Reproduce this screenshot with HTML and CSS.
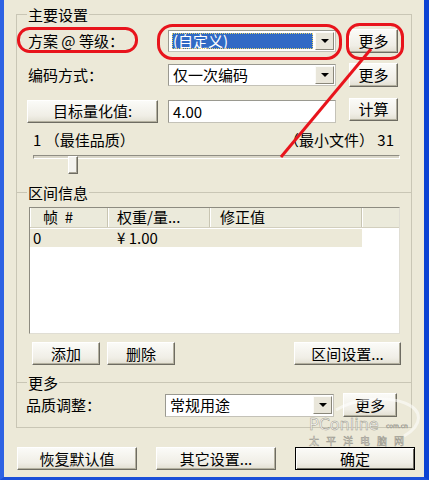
FILE: index.html
```html
<!DOCTYPE html>
<html lang="zh-CN">
<head>
  <meta charset="UTF-8">
  <title>编码设置</title>
  <link rel="stylesheet" href="styles.css">
</head>
<body>
  <div class="window">
    <div class="frame">
      <div class="group g1">
        <div class="legend"><span>主要设置</span></div>

        <div class="row r1">
          <span class="label">方案 @ 等级：</span>
          <div class="combo">
            <span class="value sel">(自定义)</span>
            <span class="arrow"></span>
          </div>
          <button class="btn more">更多</button>
        </div>

        <div class="row r2">
          <span class="label">编码方式：</span>
          <div class="combo">
            <span class="value">仅一次编码</span>
            <span class="arrow"></span>
          </div>
          <button class="btn more">更多</button>
        </div>

        <div class="row r3">
          <button class="btn target">目标量化值:</button>
          <div class="field">4.00</div>
          <button class="btn more calc">计算</button>
        </div>

        <div class="scale">
          <span>1 （最佳品质）</span>
          <span>（最小文件） 31</span>
        </div>
        <div class="slider">
          <div class="track"></div>
          <div class="thumb"></div>
        </div>
      </div>

      <div class="group g2">
        <div class="legend"><span>区间信息</span></div>
        <div class="list">
          <div class="list-head">
            <div class="col c1 hc1">帧  #</div>
            <div class="col c2">权重/量...</div>
            <div class="col c3">修正值</div>
            <div class="col c4"></div>
          </div>
          <div class="list-row">
            <div class="col c1 sel-row">0</div>
            <div class="col c2 sel-row">¥ 1.00</div>
            <div class="col c3 sel-row"></div>
          </div>
        </div>
        <div class="btnrow">
          <button class="btn small">添加</button>
          <button class="btn small del">删除</button>
          <button class="btn zone">区间设置...</button>
        </div>
      </div>

      <div class="group g3">
        <div class="legend"><span>更多</span></div>
        <div class="row r4">
          <span class="label">品质调整：</span>
          <div class="combo">
            <span class="value">常规用途</span>
            <span class="arrow"></span>
          </div>
          <button class="btn more wide">更多</button>
        </div>
      </div>
    </div>

    <div class="actions">
      <button class="btn big">恢复默认值</button>
      <button class="btn big">其它设置...</button>
      <button class="btn big default">确定</button>
    </div>
  </div>

  <!-- red marks and watermark drawn over the dialog -->
  <svg class="overlay" width="429" height="480" viewBox="0 0 429 480">
    <g class="wm">
      <path d="M336 410 A42 20 -8 0 1 404 436" fill="none" stroke="#fff" stroke-width="3" opacity="0.55"/>
      <text x="309" y="430" class="wm-big">PConline</text>
      <text x="386" y="428" class="wm-small">com.cn</text>
      <text x="309" y="445" class="wm-cn">太平洋电脑网</text>
    </g>
    <g fill="none" stroke="#e8141c" stroke-width="3">
      <rect x="18.5" y="28.5" width="118" height="23" rx="11"/>
      <rect x="158.5" y="25.5" width="182" height="33" rx="14"/>
      <rect x="347.5" y="24.5" width="55" height="34" rx="12"/>
      <line x1="371" y1="49" x2="281" y2="157"/>
    </g>
  </svg>
</body>
</html>
```

FILE: styles.css
```css
:root {
  --face: #ECE9D8;
  --line: #c9c6b5;
  --dark: #6e6c62;
  --blue: #316AC5;
}

* {
  box-sizing: border-box;
}

body {
  margin: 0;
  background: var(--face);
  font-family: "Noto Sans CJK SC", sans-serif;
  font-size: 15px;
  line-height: 16px;
  color: #000;
}

.window {
  width: 429px;
  height: 480px;
  padding-top: 14px;
  border-left: 4px solid #2d62e3;
  border-right: 5px solid #0b43d3;
  border-bottom: 3px solid #1a4fd8;
  overflow: hidden;
}

.frame {
  margin-left: 12px;
  width: 396px;
  height: 414px;
  border: 1px solid var(--line);
}

.group {
  display: flow-root;
}

.g1 {
  height: 177px;
}

.g2 {
  height: 190px;
  border-top: 1px solid var(--line);
}

.g3 {
  height: 45px;
  border-top: 1px solid var(--line);
}

.legend {
  height: 17px;
  margin-top: -9px;
  padding-left: 10px;
}

.legend span {
  display: inline-block;
  padding: 0 1px;
  line-height: 17px;
  background: var(--face);
}

.row {
  display: flex;
  align-items: center;
  height: 24px;
  padding: 0 13px 0 11px;
}

.r1 { margin-top: 6px; }
.r2 { margin-top: 10px; }
.r3 { margin-top: 12px; }

.r4 {
  margin-top: 2px;
  padding: 0 14px 0 9px;
}

.label {
  width: 140px;
  flex: none;
  white-space: pre;
}

.r4 .label {
  width: 139px;
}

.combo {
  width: 168px;
  height: 22px;
  flex: none;
  display: flex;
  align-items: center;
  padding: 0 1px 0 3px;
  background: #fff;
  border: 1px solid #9a9990;
  border-right-color: #c4c2b8;
  border-bottom-color: #c4c2b8;
}

.r4 .combo {
  width: 169px;
  height: 23px;
}

.value {
  flex: 1;
  height: 16px;
  padding-left: 1px;
  white-space: nowrap;
}

.value.sel {
  margin-right: 2px;
  color: #fff;
  background: var(--blue);
  outline: 1px dotted #e6d36a;
  outline-offset: -1px;
}

.arrow {
  width: 19px;
  height: 18px;
  display: flex;
  align-items: center;
  justify-content: center;
  background: #e9e6da;
  border: 1px solid;
  border-color: #fbfbf8 #8a877a #8a877a #fbfbf8;
}

.arrow::after {
  content: "";
  border-left: 4px solid transparent;
  border-right: 4px solid transparent;
  border-top: 4px solid #000;
}

.btn {
  font: inherit;
  color: #000;
  height: 24px;
  padding: 0;
  white-space: pre;
  background: linear-gradient(#fbfbf8, #f0eee6 70%, #e2dfd2);
  border: 1px solid;
  border-color: #fff var(--dark) var(--dark) #fff;
  box-shadow: inset -1px -1px 0 #b3b09f;
}

.more {
  width: 49px;
  margin-left: auto;
}

.more.wide {
  width: 54px;
}

.target {
  width: 131px;
  height: 23px;
  margin-left: -1px;
}

.calc {
  height: 23px;
  margin-bottom: 4px;
}

.field {
  width: 168px;
  height: 23px;
  margin-left: 10px;
  padding: 3px 0 0 4px;
  background: #fff;
  border: 1px solid #9a9990;
  border-right-color: #c4c2b8;
  border-bottom-color: #c4c2b8;
}

.scale {
  display: flex;
  justify-content: space-between;
  margin-top: 9px;
  padding: 0 17px 0 16px;
  white-space: pre;
}

.slider {
  position: relative;
  height: 20px;
  margin: 0 11px 0 16px;
}

.track {
  height: 4px;
  margin-top: 7px;
  background: #d9d6c8;
  border: 1px solid;
  border-color: #8f8d83 #fff #fff #8f8d83;
}

.thumb {
  position: absolute;
  left: 35px;
  top: 1px;
  width: 10px;
  height: 18px;
  background: #f4f3ee;
  border: 1px solid;
  border-color: #fff var(--dark) var(--dark) #fff;
  box-shadow: inset -1px -1px 0 #a8a597;
}

.list {
  height: 127px;
  margin: 6px 11px 0 12px;
  background: #fff;
  border: 1px solid;
  border-color: #8d8b80 #e0ded4 #e0ded4 #8d8b80;
}

.list-head {
  display: flex;
  height: 20px;
  background: #ebeadb;
  border-bottom: 1px solid #d2cfbe;
}

.list-row {
  display: flex;
  height: 18px;
  margin-top: 1px;
}

.col {
  flex: none;
  height: 100%;
  padding-top: 1px;
  white-space: pre;
}

.list-head .col {
  border-right: 1px solid #c8c5b2;
  box-shadow: inset 1px 0 0 #fff;
}

.list-head .c4 {
  flex: 1;
  border-right: none;
}

.c1 { width: 78px; padding-left: 3px; }
.c2 { width: 102px; padding-left: 9px; }
.c3 { width: 152px; padding-left: 10px; }

.hc1 {
  padding-left: 13px;
}

.sel-row {
  background: var(--face);
}

.btnrow {
  display: flex;
  margin-top: 8px;
  padding: 0 10px 0 15px;
}

.btnrow .btn {
  height: 23px;
}

.small {
  width: 68px;
}

.del {
  margin-left: 7px;
}

.zone {
  width: 107px;
  margin-left: auto;
}

.actions {
  display: flex;
  gap: 19px;
  margin: 19px 0 0 13px;
}

.big {
  width: 120px;
  height: 23px;
}

.default {
  border-color: #000;
  box-shadow: inset 1px 1px 0 #fff, inset -1px -1px 0 var(--dark);
}

.overlay {
  position: absolute;
  top: 0;
  left: 0;
  pointer-events: none;
}

.wm text {
  fill: #fff;
  fill-opacity: 0.75;
  stroke: #9a988d;
  stroke-width: 0.5;
}

.wm-big {
  font-family: "DejaVu Sans", sans-serif;
  font-size: 16px;
}

.wm-small {
  font-family: "DejaVu Sans", sans-serif;
  font-size: 6px;
}

.wm-cn {
  font-family: "Noto Sans CJK SC", sans-serif;
  font-size: 10px;
  letter-spacing: 7px;
}
```
